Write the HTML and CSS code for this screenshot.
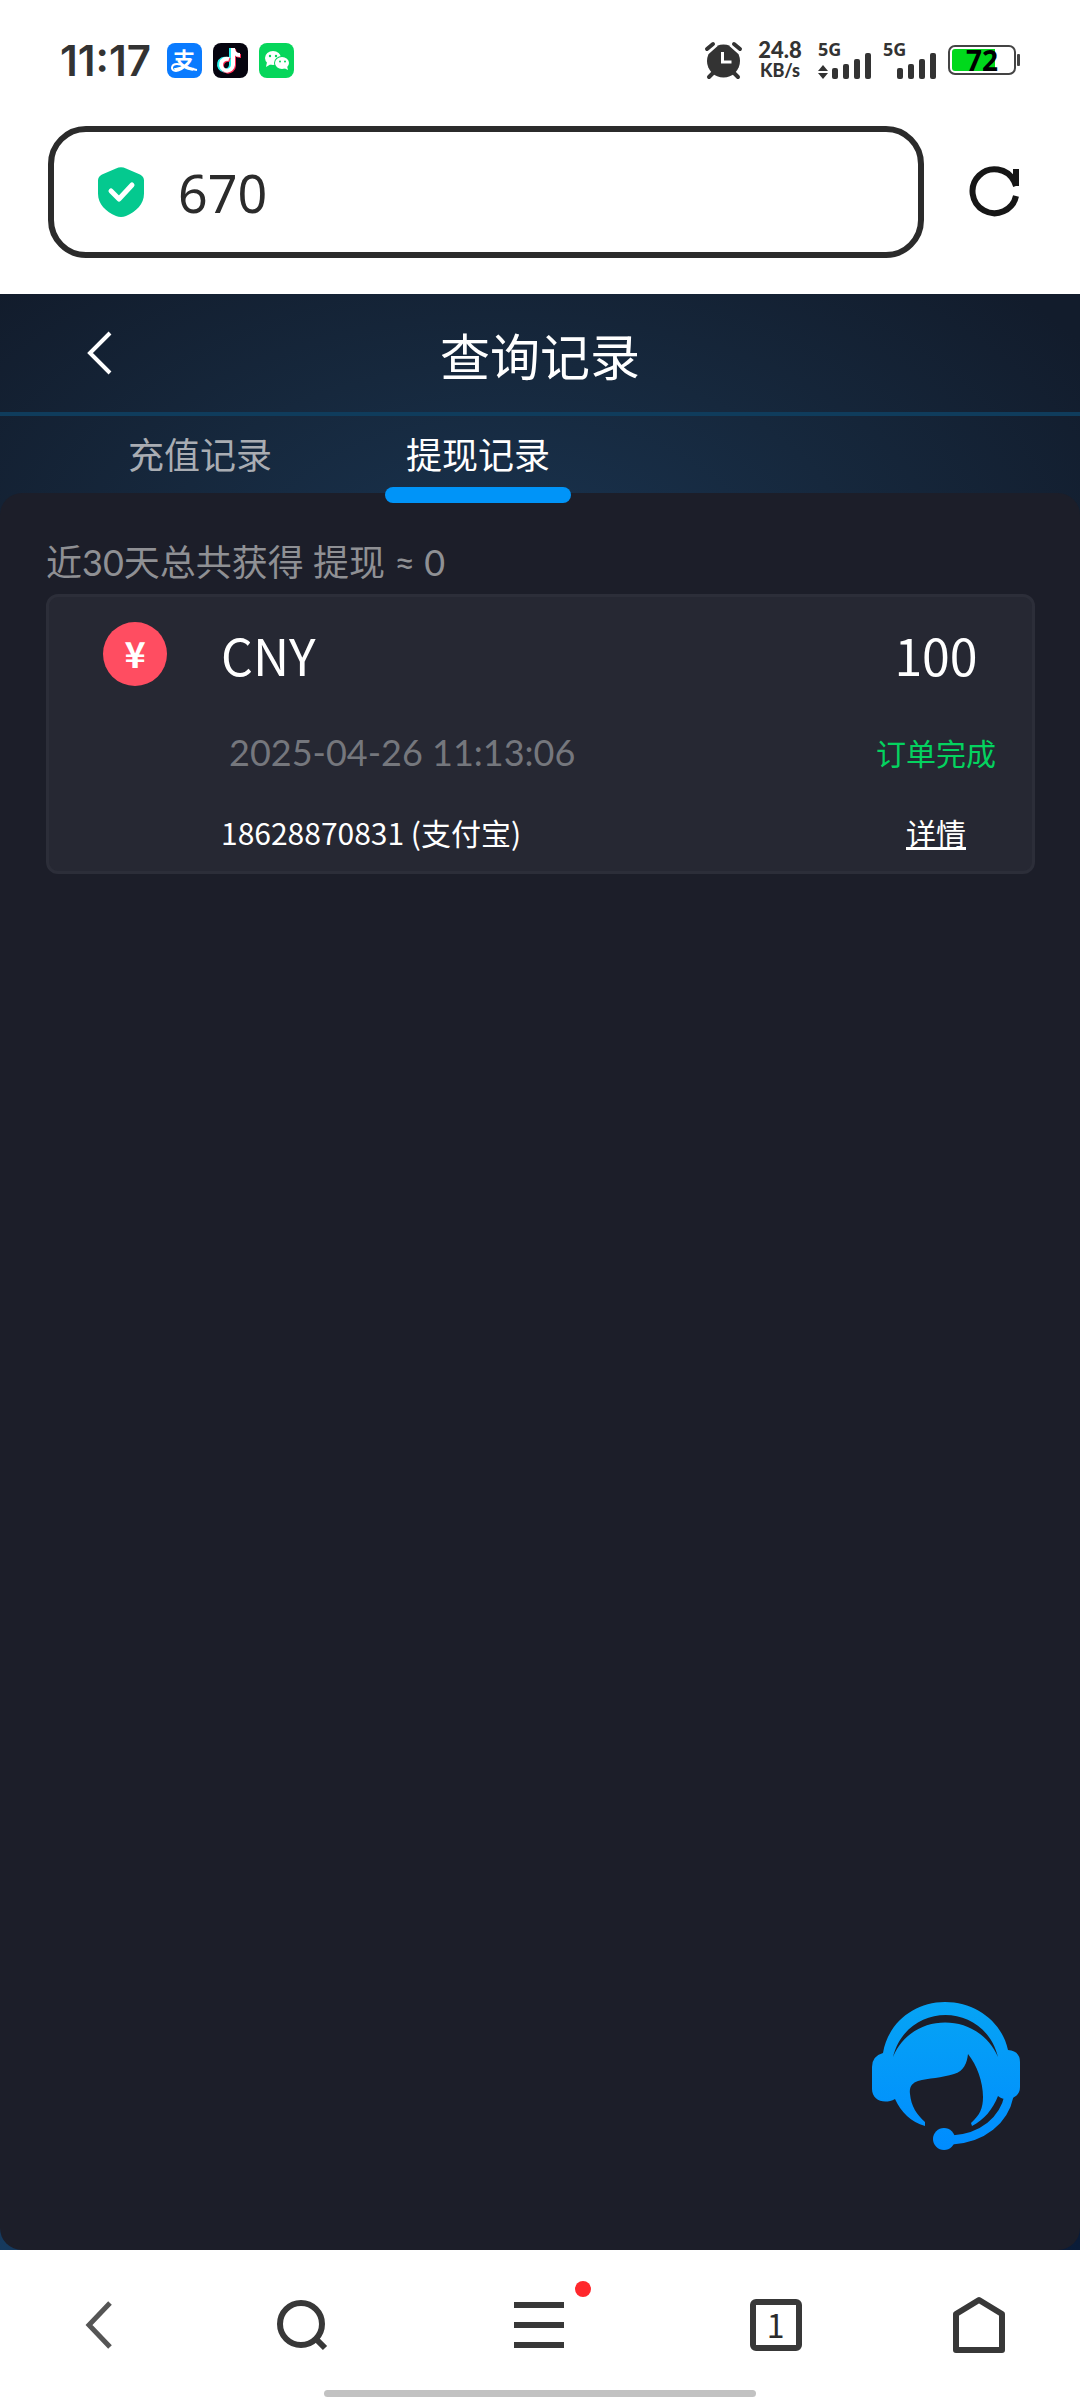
FILE: index.html
```html
<!DOCTYPE html>
<html lang="zh-CN">
<head>
    <meta charset="UTF-8">
    <meta name="viewport" content="width=device-width, initial-scale=1.0">
    <title>查询记录</title>
    <link rel="stylesheet" href="styles.css">
</head>
<body>
    <!-- Phone status bar -->
    <div class="status-bar">
        <div class="status-left">
            <span class="time">11:17</span>
            <svg class="app-icon" viewBox="0 0 35 35">
                <rect width="35" height="35" rx="8" fill="#0a7bff"/>
                <text class="app-char" x="17" y="25" text-anchor="middle">支</text>
                <path d="M21 20C17 25 13 28 9 28c-6 0-5-7 1-7 6 0 11 5 20 6" fill="none" stroke="#fff" stroke-width="2"/>
            </svg>
            <svg class="app-icon" viewBox="0 0 35 35">
                <rect width="35" height="35" rx="8" fill="#06040f"/>
                <g fill="none" stroke-width="4">
                    <path d="M14 16a6 6 0 1 0 4 6V5c0 4 3 7 7 7" stroke="#25f4ee"/>
                    <path d="M17 17a6 6 0 1 0 4 6V6c0 4 3 7 7 7" stroke="#fe2c55"/>
                    <path d="M16 16a6 6 0 1 0 4 6V5c0 4 3 7 7 7" stroke="#fff"/>
                </g>
            </svg>
            <svg class="app-icon" viewBox="0 0 35 35">
                <rect width="35" height="35" rx="8" fill="#06d65b"/>
                <path d="M8 19l-1 5 5-3z" fill="#fff"/>
                <ellipse cx="14" cy="15" rx="8" ry="7" fill="#fff"/>
                <ellipse cx="23" cy="20" rx="8" ry="7" fill="#06d65b"/>
                <ellipse cx="23" cy="20" rx="7" ry="6" fill="#fff"/>
                <path d="M25 25l4 2-1-4z" fill="#fff"/>
                <g fill="#06d65b">
                    <circle cx="11" cy="13" r="1.2"/><circle cx="17" cy="13" r="1.2"/>
                    <circle cx="21" cy="18.500" r="1"/><circle cx="26" cy="18.500" r="1"/>
                </g>
            </svg>
        </div>
        <div class="status-right">
            <svg class="alarm" viewBox="0 0 37 37">
                <circle cx="18.500" cy="19" r="16.500" fill="#333"/>
                <path d="M1 9l9-8M36 9l-9-8" stroke="#fff" stroke-width="8"/>
                <path d="M2 7l6-5M35 7l-6-5M8 31l-4 4M29 31l4 4" stroke="#333" stroke-width="4" stroke-linecap="round"/>
                <path d="M17.500 10v10h9" fill="none" stroke="#fff" stroke-width="3"/>
            </svg>
            <div class="speed"><span class="speed-num">24.8</span><span class="speed-unit">KB/s</span></div>
            <svg class="signal" viewBox="0 0 54 37">
                <text class="net" x="0" y="14">5G</text>
                <path d="M5 23l5 6H0zM5 37l5-6H0z" fill="#333"/>
                <g fill="#333"><rect x="14" y="26" width="6" height="11" rx="2"/><rect x="25" y="22" width="6" height="15" rx="2"/><rect x="36" y="17" width="6" height="20" rx="2"/><rect x="47" y="11" width="6" height="26" rx="2"/></g>
            </svg>
            <svg class="signal" viewBox="0 0 54 37">
                <text class="net" x="0" y="14">5G</text>
                <g fill="#333"><rect x="14" y="26" width="6" height="11" rx="2"/><rect x="25" y="22" width="6" height="15" rx="2"/><rect x="36" y="17" width="6" height="20" rx="2"/><rect x="47" y="11" width="6" height="26" rx="2"/></g>
            </svg>
            <div class="battery">
                <span class="battery-num">72</span>
            </div>
        </div>
    </div>

    <!-- Browser address bar -->
    <form class="address-bar">
        <label class="address-box">
            <svg class="shield" viewBox="0 0 46 50">
                <path d="M18 1.500q5-2.500 10 0l14 6q4 2 4 6v13c0 11-8 18-18 22.500q-5 2-10 0C8 44.500 0 37.500 0 26.500v-13q0-4 4-6z" fill="#04c98f"/>
                <path d="M13 24l8 8 13-14" fill="none" stroke="#fff" stroke-width="5" stroke-linecap="round" stroke-linejoin="round"/>
            </svg>
            <input class="address-input" type="text" value="670" aria-label="地址">
        </label>
        <button class="reload" type="button" aria-label="刷新">
            <svg width="50" height="50" viewBox="0 0 50 50" fill="none" stroke="#161616" stroke-width="6">
                <path d="M46 29A22 22 0 1 1 44 14l2 5M46 2v17"/>
            </svg>
        </button>
    </form>

    <main class="page">
        <header class="page-header">
            <button class="back" type="button" aria-label="返回">
                <svg width="24" height="42" viewBox="0 0 24 42" fill="none" stroke="#fff" stroke-width="4">
                    <path d="M22 1L2 21l20 20"/>
                </svg>
            </button>
            <h1>查询记录</h1>
        </header>

        <nav class="tabs">
            <a class="tab" href="#recharge">充值记录</a>
            <a class="tab active" href="#withdraw">提现记录</a>
        </nav>

        <section class="panel">
            <p class="summary">近30天总共获得 提现 ≈ 0</p>

            <article class="record">
                <span class="coin">¥</span>
                <span class="currency">CNY</span>
                <span class="amount">100</span>
                <time class="date">2025-04-26 11:13:06</time>
                <span class="state">订单完成</span>
                <span class="account">18628870831 (支付宝)</span>
                <a class="detail" href="#detail">详情</a>
            </article>
        </section>

        <!-- Floating customer service button -->
        <button class="service" type="button" aria-label="客服">
            <svg width="148" height="149" viewBox="0 0 148 149">
                <defs>
                    <linearGradient id="blue" gradientUnits="userSpaceOnUse" x1="0" y1="0" x2="0" y2="149">
                        <stop offset="0" stop-color="#06a4f4"/>
                        <stop offset="1" stop-color="#008cff"/>
                    </linearGradient>
                </defs>
                <path fill="url(#blue)" fill-rule="evenodd" d="M11 52C16 22 42 1 73 1s57 20 63 48q12 1 12 12v25q0 9-10 12-7 1-12-3c-5 13-14 24-26 30l-1-3c9-8 12-15 12-26 0-15-6-32-15-43-1 9-4 17-14 20-12 4-26 4-36 7-6 2-9 6-8 13 1 12 7 21 15 28v4C39 121 29 111 23 98 12 104 0 99 0 88V66Q0 55 11 52zM21 56C40 10 106 10 126 56 112 0 35 0 21 56z"/>
                <path d="M137 95C132 119 111 137 80 139" fill="none" stroke="url(#blue)" stroke-width="9"/>
                <circle cx="72" cy="138" r="11" fill="url(#blue)"/>
            </svg>
        </button>
    </main>

    <!-- Browser toolbar -->
    <footer class="toolbar">
        <nav class="toolbar-items">
            <button type="button" aria-label="后退">
                <svg width="26" height="48" viewBox="0 0 26 48" fill="none" stroke="#555" stroke-width="5"><path d="M24 2L3 24l21 22"/></svg>
            </button>
            <button type="button" aria-label="搜索">
                <svg width="50" height="52" viewBox="0 0 50 52" fill="none" stroke="#383838" stroke-width="6"><circle cx="24" cy="25" r="21"/><path d="M39 40l9 9"/></svg>
            </button>
            <button class="menu" type="button" aria-label="菜单">
                <svg width="50" height="46" viewBox="0 0 50 46" fill="none" stroke="#383838" stroke-width="6"><path d="M0 3h50M0 23h50M0 43h50"/></svg>
            </button>
            <button type="button" aria-label="标签页"><span class="tab-count">1</span></button>
            <button type="button" aria-label="主页">
                <svg width="52" height="60" viewBox="0 0 52 60" fill="none" stroke="#383838" stroke-width="6" stroke-linejoin="round"><path d="M3 19L26 5l23 14v36H3z"/></svg>
            </button>
        </nav>
        <div class="home-indicator"></div>
    </footer>
</body>
</html>
```
FILE: styles.css
```css
* {
    box-sizing: border-box;
}

body {
    margin: 0;
    min-height: 100vh;
    display: flex;
    flex-direction: column;
    background-color: #fff;
    color: #2b2b2b;
    font-family: "Noto Sans CJK SC", sans-serif;
}

button {
    padding: 0;
    border: none;
    background: none;
    font: inherit;
    color: inherit;
    cursor: pointer;
}

svg {
    display: block;
    flex: none;
    overflow: visible;
}

/* status bar */
.status-bar {
    display: flex;
    justify-content: space-between;
    align-items: center;
    height: 120px;
    padding: 0 60px;
}

.status-left,
.status-right {
    display: flex;
    align-items: center;
    gap: 11px;
}

.time {
    width: 96px;
    font-family: Inter, sans-serif;
    font-size: 42px;
    font-weight: 600;
    color: #333;
}

.app-icon {
    width: 35px;
    height: 35px;
}

.app-char {
    font-size: 22px;
    font-weight: bold;
    fill: #fff;
}

.alarm {
    width: 37px;
    height: 37px;
}

.speed {
    display: flex;
    flex-direction: column;
    align-items: center;
    width: 54px;
    font-family: Lato, sans-serif;
    font-weight: 900;
    line-height: 21px;
    color: #333;
}

.speed-num {
    font-size: 22px;
}

.speed-unit {
    font-size: 18px;
}

.signal {
    width: 54px;
    height: 37px;
}

.net {
    font-family: "Noto Sans", sans-serif;
    font-size: 18px;
    font-weight: bold;
    fill: #333;
}

.battery {
    position: relative;
    width: 68px;
    height: 30px;
    margin-right: 4px;
    border: 2px solid #444;
    border-radius: 7px;
    background: linear-gradient(to right, #00d91c 72%, #fff 72%) content-box;
    padding: 2px;
    text-align: center;
}

.battery::after {
    content: "";
    position: absolute;
    top: 7px;
    right: -6px;
    width: 3px;
    height: 12px;
    border-radius: 1px;
    background-color: #444;
}

.battery-num {
    display: block;
    font-family: "Noto Sans", sans-serif;
    font-size: 28px;
    font-weight: bold;
    line-height: 22px;
    color: #000;
}

/* address bar */
.address-bar {
    display: flex;
    align-items: center;
    gap: 46px;
    padding: 6px 60px 36px 48px;
}

.address-box {
    flex: 1;
    min-width: 0;
    display: flex;
    align-items: center;
    gap: 34px;
    height: 132px;
    padding: 0 44px;
    border: 6px solid #2b2b2b;
    border-radius: 38px;
}

.shield {
    width: 46px;
    height: 50px;
}

.address-input {
    flex: 1;
    min-width: 0;
    padding: 0;
    border: none;
    outline: none;
    background: none;
    font-family: "Noto Sans", sans-serif;
    font-size: 52px;
    color: #2b2b2b;
}

/* page */
.page {
    flex: 1;
    position: relative;
    display: flex;
    flex-direction: column;
    background:
        radial-gradient(ellipse 64% 400px at 47% 270px, #19334f, #16283d 50%, #121c2c) top / 100% 600px no-repeat,
        linear-gradient(to right, #163a5e, #0a1c38);
}

.page-header {
    display: grid;
    grid-template-columns: 200px 1fr 200px;
    align-items: center;
    height: 122px;
    border-bottom: 4px solid #0f3c5c;
}

.back {
    display: flex;
    justify-content: center;
}

.page-header h1 {
    margin: 0;
    padding-top: 2px;
    font-size: 50px;
    line-height: 60px;
    font-weight: normal;
    text-align: center;
    color: #fff;
}

.tabs {
    display: flex;
    padding-left: 61px;
}

.tab {
    position: relative;
    width: 278px;
    padding-bottom: 3px;
    line-height: 74px;
    font-size: 36px;
    text-align: center;
    text-decoration: none;
    color: #a9adb3;
}

.tab.active {
    color: #fff;
}

.tab.active::after {
    content: "";
    position: absolute;
    left: 46px;
    right: 46px;
    bottom: -10px;
    height: 16px;
    border-radius: 8px;
    background-color: #0094f8;
}

.panel {
    flex: 1;
    padding: 44px 45px 0 46px;
    border-radius: 22px;
    background-color: #1c1e29;
}

.summary {
    margin: 0 0 7px;
    font-family: Lato, "Noto Sans CJK SC", sans-serif;
    font-size: 36px;
    line-height: 50px;
    color: #8f9094;
}

.record {
    display: grid;
    grid-template-columns: 172px 1fr 192px;
    grid-template-rows: 114px 82px 78px;
    align-items: center;
    border: 3px solid #2c2e39;
    border-radius: 12px;
    background-color: #262833;
    color: #fff;
}

.coin {
    width: 64px;
    height: 64px;
    justify-self: center;
    border-radius: 50%;
    background-color: #ff4d61;
    font-size: 36px;
    font-weight: bold;
    line-height: 60px;
    text-align: center;
}

.currency,
.amount {
    font-size: 50px;
    line-height: 60px;
}

.amount,
.state,
.detail {
    text-align: center;
}

.date {
    grid-column: 2;
    padding-left: 8px;
    font-family: Lato, sans-serif;
    font-size: 36px;
    line-height: 50px;
    color: #75777d;
}

.state,
.account,
.detail {
    font-size: 30px;
    line-height: 40px;
}

.state {
    color: #04d25f;
}

.account {
    grid-column: 2;
}

.detail {
    color: #fff;
}

.service {
    position: absolute;
    right: 60px;
    bottom: 100px;
}

/* toolbar */
.toolbar {
    display: flex;
    flex-direction: column;
    align-items: center;
    height: 150px;
}

.toolbar-items {
    display: grid;
    grid-template-columns: 15fr 16fr 20fr 16fr 15fr;
    align-items: center;
    width: 100%;
    height: 140px;
    padding: 10px 2px 0 0;
}

.toolbar-items button {
    position: relative;
    justify-self: center;
}

.menu::after {
    content: "";
    position: absolute;
    top: -21px;
    right: -27px;
    width: 16px;
    height: 16px;
    border-radius: 50%;
    background-color: #ff282c;
}

.tab-count {
    display: block;
    width: 52px;
    height: 52px;
    border: 6px solid #383838;
    border-radius: 6px;
    font-size: 32px;
    line-height: 38px;
    text-align: center;
}

.home-indicator {
    width: 40%;
    height: 7px;
    border-radius: 4px;
    background-color: #c2c2c2;
}
```
